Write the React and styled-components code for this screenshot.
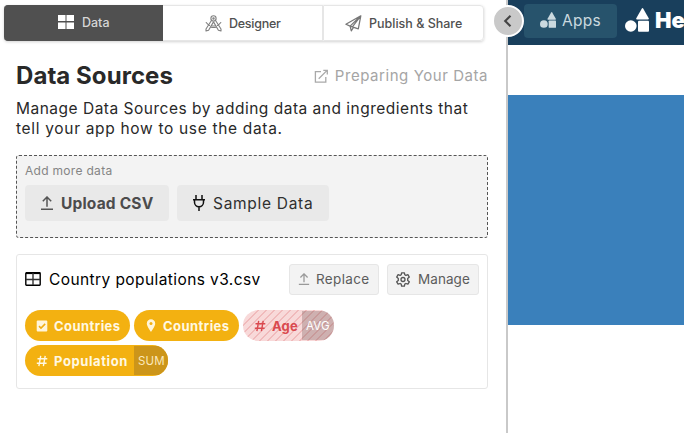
import React from 'react';
import styled, { createGlobalStyle, css } from 'styled-components';

const GlobalStyle = createGlobalStyle`
  * { box-sizing: border-box; }
  body {
    margin: 0;
    overflow: hidden;
    background: #fff;
    color: #292929;
    font-family: Inter, "Liberation Sans", sans-serif;
  }
  svg { display: block; flex: none; }
  button { font: inherit; color: inherit; border: 0; padding: 0; margin: 0; }
`;

const Page = styled.div`
  display: grid;
  grid-template-columns: 508px 1fr;
  width: 100vw;
  height: 100vh;
  overflow: hidden;
`;

const Sidebar = styled.aside`
  position: relative;
  border-right: 2px solid #c9c9c9;
  padding: 5px 0 0;
`;

const Tabs = styled.nav`
  display: flex;
  width: 480px;
  height: 36px;
  margin-left: 4px;
  border-radius: 4px;
  box-shadow: 0 1px 3px rgba(0, 0, 0, 0.18);
`;

const Tab = styled.button`
  display: flex;
  align-items: center;
  width: ${(p) => p.$width}px;
  padding-left: ${(p) => p.$inset}px;
  gap: ${(p) => p.$gap}px;
  font-size: 12.5px;
  font-weight: 500;
  letter-spacing: ${(p) => p.$spacing || 0}px;
  white-space: nowrap;
  color: #505050;
  background: #fff;
  border: 1px solid #e6e6e6;
  border-left-width: 0;
  ${(p) => p.$last && css`border-left-width: 1px; border-radius: 0 4px 4px 0;`}
  ${(p) =>
    p.$active &&
    css`
      color: #d6d6d6;
      background: #505050;
      border-color: #505050;
      border-radius: 4px 0 0 4px;
      padding-bottom: 2px;
    `}
`;

const Content = styled.main`
  padding: 23px 18px 0 16px;
`;

const TitleRow = styled.header`
  display: flex;
  align-items: center;
  justify-content: space-between;
  height: 24px;
`;

const Title = styled.h1`
  margin: 0;
  font-size: 24px;
  line-height: 24px;
  font-weight: 700;
  letter-spacing: 0.06px;
`;

const HelpLink = styled.a`
  display: flex;
  align-items: center;
  gap: 6px;
  font-size: 15px;
  letter-spacing: 0.55px;
  line-height: 20px;
  color: #a5a5a5;
  white-space: nowrap;
`;

const Intro = styled.p`
  margin: 11px 0 16px;
  width: 470px;
  font-size: 15.5px;
  line-height: 20px;
  white-space: nowrap;
`;

const IntroLine = styled.span`
  display: block;
  letter-spacing: ${(p) => p.$spacing}px;
`;

const DropZone = styled.section`
  height: 83px;
  padding: 8px;
  border: 1px dashed #555;
  border-radius: 3px;
  background: #f3f3f3;
`;

const Hint = styled.div`
  height: 15px;
  margin-bottom: 6px;
  font-size: 12px;
  line-height: 14px;
  letter-spacing: 0.3px;
  color: #858585;
`;

const Row = styled.div`
  display: flex;
  gap: 8px;
`;

const SourceButton = styled.button`
  display: flex;
  align-items: center;
  width: ${(p) => p.$width}px;
  height: 36px;
  padding-left: 15px;
  gap: 7px;
  border-radius: 4px;
  background: #e9e9e9;
  font-size: 15.5px;
  white-space: nowrap;
  letter-spacing: ${(p) => (p.$primary ? 0.18 : 0.7)}px;
  font-weight: ${(p) => (p.$primary ? 700 : 400)};
  color: ${(p) => (p.$primary ? '#4c4c4c' : '#303030')};
`;

const DataCard = styled.section`
  height: 135px;
  margin-top: 16px;
  padding: 8px;
  border: 1px solid #e6e6e6;
  border-radius: 3px;
`;

const CardHeader = styled.div`
  display: flex;
  align-items: center;
  gap: 8px;
  height: 32px;
`;

const FileName = styled.div`
  display: flex;
  align-items: center;
  flex: 1;
  gap: 8px;
  color: #000;
  font-size: 15.5px;
  letter-spacing: 0.41px;
  white-space: nowrap;
`;

const SmallButton = styled.button`
  display: flex;
  align-items: center;
  width: ${(p) => p.$width}px;
  height: 31px;
  padding-left: 8px;
  gap: ${(p) => p.$gap}px;
  background: #f3f3f3;
  border: 1px solid #e6e6e6;
  border-radius: 3px;
  font-size: 13.5px;
  letter-spacing: ${(p) => p.$spacing}px;
  color: #5c5c5c;
`;

const Chips = styled.div`
  display: flex;
  flex-wrap: wrap;
  gap: 4px;
  margin-top: 15px;
`;

const Chip = styled.div`
  display: flex;
  align-items: center;
  height: 31px;
  width: ${(p) => p.$width}px;
  border-radius: 16px;
  overflow: hidden;
  padding-left: 11px;
  gap: 6px;
  font-size: 13px;
  font-weight: 700;
  letter-spacing: ${(p) => p.$spacing}px;
  color: #fff8e2;
  background: #f3b111;
  ${(p) =>
    p.$warning &&
    css`
      color: #da494f;
      background: repeating-linear-gradient(135deg, #f8d9d9 0 4.6px, #f0babb 4.6px 5.66px);
    `}
`;

const ChipLabel = styled.span`
  flex: 1;
  width: 0;
  white-space: nowrap;
`;

const Aggregate = styled.span`
  display: flex;
  flex: none;
  align-items: center;
  align-self: stretch;
  margin: 1px 0 1px -6px;
  width: ${(p) => p.$width}px;
  padding-left: 4px;
  font-size: 11.5px;
  font-weight: 400;
  letter-spacing: 0.1px;
  color: ${(p) => (p.$warning ? '#fff' : '#fbe8bb')};
  background: ${(p) => (p.$warning ? 'rgba(105, 75, 75, 0.29)' : '#cc951a')};
`;

const Collapse = styled.button`
  position: absolute;
  z-index: 1;
  top: 5px;
  right: -18px;
  display: grid;
  place-items: center;
  width: 32px;
  height: 32px;
  border: 2px solid #fff;
  border-radius: 50%;
  background: #c9c9c9;
  color: #444;
`;

const Preview = styled.div`
  overflow: hidden;
`;

const AppBar = styled.header`
  display: flex;
  align-items: flex-start;
  gap: 8px;
  height: 45px;
  padding: 4px 0 0 16px;
  background: #193f5c;
`;

const AppsButton = styled.button`
  display: flex;
  align-items: center;
  flex: none;
  width: 93px;
  height: 34px;
  padding: 0 0 2px 16px;
  gap: 6px;
  border-radius: 4px;
  background: #27536c;
  color: #cbd9df;
  font-size: 15.5px;
  letter-spacing: 0.3px;
`;

const Brand = styled.div`
  display: flex;
  align-items: center;
  flex: none;
  height: 32px;
  gap: 6px;
  color: #fff;
  font-size: 22px;
  font-weight: 900;
  white-space: nowrap;
`;

const Banner = styled.div`
  height: 230px;
  margin-top: 50px;
  background: #3a80bb;
`;

const TilesIcon = () => (
  <svg width="16" height="14" viewBox="0 0 16 14" fill="#fff">
    <path d="M0 0h7.5v6H0zM8.5 0H16v6H8.5zM0 7.5h7.5V14H0zM8.5 7.5H16V14H8.5z" />
  </svg>
);

const CompassIcon = () => (
  <svg width="17" height="17" viewBox="0 0 17 17" fill="none" stroke="#808080" strokeWidth="1.1" strokeLinejoin="round" strokeLinecap="round">
    <circle cx="8.5" cy="3.4" r="2.6" />
    <circle cx="8.5" cy="3.4" r=".7" />
    <path d="M6.6 5.2 1 14v2l2.6-.8 4.9-8.3 4.9 8.3 2.6.8v-2l-5.6-8.8M1.2 7.5c1 1.5 2.2 2.4 3.4 3M15.8 7.5c-1 1.5-2.2 2.4-3.4 3M6.4 10.8c1.4.3 2.8.3 4.2 0M6 12.2c1.7.4 3.3.4 5 0" />
  </svg>
);

const PlaneIcon = () => (
  <svg width="17" height="17" viewBox="0 0 17 17" fill="none" stroke="#777" strokeWidth="1.25" strokeLinejoin="round" strokeLinecap="round">
    <path d="M15.8.8.9 9.2l4.2 1.9 8.2 2.7L15.8.8 5.1 11.1l1.2 4.8 2.1-3.4M15.8.8 7.4 11.8" />
  </svg>
);

const ExternalIcon = () => (
  <svg width="15" height="15" viewBox="0 0 15 15" fill="none" stroke="#a9a9a9" strokeWidth="1.3">
    <path d="M7 2.7H1.4v10.4h10.4V8M4.7 9.8l8.4-8.4M9.3 1.4h4v4" />
  </svg>
);

const UploadIcon = ({ size = 14, color = '#555' }) => (
  <svg width={size} height={size} viewBox="0 0 14 14" fill="none" stroke={color} strokeWidth="1.5">
    <path d="M1 13.2h12M7 10.8V1.1M2.8 5.2 7 1l4.2 4.2" />
  </svg>
);

const PlugIcon = () => (
  <svg width="14" height="16" viewBox="0 0 14 16" fill="none" stroke="#111" strokeWidth="1.5">
    <path d="M4 0v4M10 0v4M1 4.7h12M2.5 5v2.2a4.5 4.5 0 0 0 9 0V5M7 11.7V16" />
  </svg>
);

const TableIcon = () => (
  <svg width="16" height="14" viewBox="0 0 16 14" fill="none" stroke="#000" strokeWidth="1.4">
    <rect x=".8" y=".8" width="14.4" height="12.4" rx=".6" />
    <path d="M1 1.1h14" strokeWidth="2" />
    <path d="M1 7.5h14M8 1v12" stroke="#333" />
  </svg>
);

const GearIcon = () => (
  <svg width="14" height="15" viewBox="0 0 14 15" fill="none" stroke="#555" strokeWidth="1.3" strokeLinejoin="round">
    <path d="M5.6.8h2.8l.4 2 1.1.6 2-.7 1.4 2.4-1.6 1.4v1.9l1.6 1.4-1.4 2.4-2-.7-1.1.6-.4 2H5.6l-.4-2-1.1-.6-2 .7L.7 9.8l1.6-1.4V6.5L.7 5.1l1.4-2.4 2 .7 1.1-.6z" />
    <circle cx="7" cy="7.5" r="2" />
  </svg>
);

const CheckIcon = () => (
  <svg width="12" height="12" viewBox="0 0 12 12">
    <rect x=".7" y=".5" width="10.6" height="11" rx="1" fill="#fff5da" />
    <path d="m3 6.1 2 2 4.2-4.2" fill="none" stroke="#efad14" strokeWidth="1.5" />
  </svg>
);

const PinIcon = () => (
  <svg width="12" height="13" viewBox="0 0 12 13">
    <path d="M6 .2a4.2 4.2 0 0 0-4.2 4.2C1.8 7.5 6 12.8 6 12.8s4.2-5.3 4.2-8.4A4.2 4.2 0 0 0 6 .2z" fill="#fff5da" />
    <circle cx="6" cy="4.4" r="1.5" fill="#f3b111" />
  </svg>
);

const HashIcon = () => (
  <svg width="12" height="12" viewBox="0 0 12 12" fill="none" stroke="currentColor" strokeWidth="1.4">
    <path d="M4.7.8 2.9 11.2M9.2.8 7.4 11.2M1.5 3.8h9.8M.8 8.2h9.8" />
  </svg>
);

const ShapesIcon = ({ size }) => (
  <svg width={size} height={size} viewBox="0 0 24 24" fill="currentColor">
    <circle cx="5.8" cy="18" r="5.8" />
    <rect x="13" y="12.8" width="11" height="11" rx="1" />
    <path d="M16.7.7q.8-1.3 1.6 0l5.4 9.5q.6 1.3-.9 1.3H12.2q-1.5 0-.9-1.3z" />
  </svg>
);

const ChevronIcon = () => (
  <svg width="10" height="14" viewBox="0 0 10 14" fill="none" stroke="currentColor" strokeWidth="2.1">
    <path d="M7.5 1.8 2.2 7l5.3 5.2" />
  </svg>
);

export default function App() {
  return (
    <Page>
      <GlobalStyle />
      <Sidebar>
        <Tabs>
          <Tab $active $width={159} $inset={54} $gap={8}><TilesIcon />Data</Tab>
          <Tab $width={160} $inset={42} $gap={7} $spacing={-0.27}><CompassIcon />Designer</Tab>
          <Tab $last $width={161} $inset={21} $gap={7}><PlaneIcon />Publish &amp; Share</Tab>
        </Tabs>
        <Content>
          <TitleRow>
            <Title>Data Sources</Title>
            <HelpLink><ExternalIcon />Preparing Your Data</HelpLink>
          </TitleRow>
          <Intro>
            <IntroLine $spacing={0.5}>Manage Data Sources by adding data and ingredients that</IntroLine>
            <IntroLine $spacing={0.68}>tell your app how to use the data.</IntroLine>
          </Intro>
          <DropZone>
            <Hint>Add more data</Hint>
            <Row>
              <SourceButton $primary $width={144}><UploadIcon />Upload CSV</SourceButton>
              <SourceButton $width={152}><PlugIcon />Sample Data</SourceButton>
            </Row>
          </DropZone>
          <DataCard>
            <CardHeader>
              <FileName><TableIcon />Country populations v3.csv</FileName>
              <SmallButton $width={90} $gap={6} $spacing={0.36}><UploadIcon size={12} color="#999" />Replace</SmallButton>
              <SmallButton $width={92} $gap={8} $spacing={0.07}><GearIcon />Manage</SmallButton>
            </CardHeader>
            <Chips>
              <Chip $width={105} $spacing={0.45}><CheckIcon />Countries</Chip>
              <Chip $width={105} $spacing={0.45}><PinIcon />Countries</Chip>
              <Chip $warning $width={91} $spacing={0.2}>
                <HashIcon /><ChipLabel>Age</ChipLabel><Aggregate $warning $width={32}>AVG</Aggregate>
              </Chip>
              <Chip $width={143} $spacing={0.6}>
                <HashIcon /><ChipLabel>Population</ChipLabel><Aggregate $width={34}>SUM</Aggregate>
              </Chip>
            </Chips>
          </DataCard>
        </Content>
        <Collapse aria-label="Collapse panel"><ChevronIcon /></Collapse>
      </Sidebar>
      <Preview>
        <AppBar>
          <AppsButton><ShapesIcon size={16} />Apps</AppsButton>
          <Brand><ShapesIcon size={24} />He</Brand>
        </AppBar>
        <Banner />
      </Preview>
    </Page>
  );
}
